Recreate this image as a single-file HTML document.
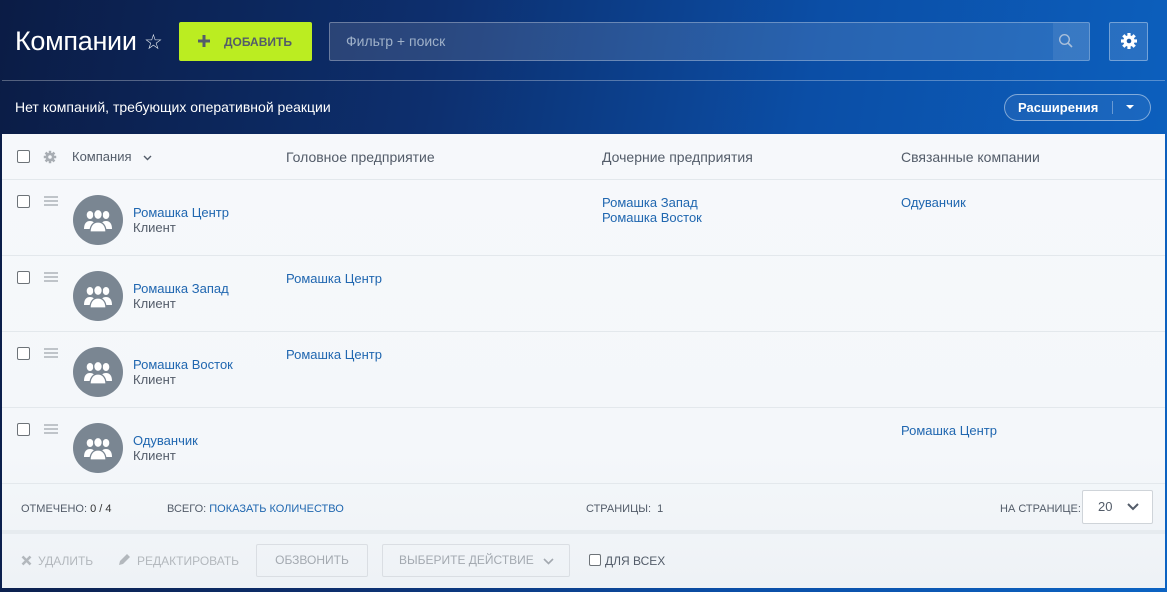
<!DOCTYPE html>
<html><head><meta charset="utf-8"><style>
*{margin:0;padding:0;box-sizing:border-box}
body{width:1167px;height:592px;overflow:hidden;font-family:"Liberation Sans",sans-serif;position:relative;
background:linear-gradient(100deg,#0b1c45 0%,#0d2f6e 35%,#0b4ea6 65%,#0c63c2 100%);}
.a{position:absolute;white-space:nowrap}
.panel{position:absolute;left:2px;top:134px;width:1163px;height:454px;background:linear-gradient(180deg,#f6f8fb 0%,#f4f7fa 70%,#eef2f6 100%)}
.cb{position:absolute;width:13px;height:13px;border:1px solid #6d7378;border-radius:2px;background:#fff}
.av{position:absolute;width:50px;height:50px;border-radius:50%;background:#7a8692}
.ln{color:#2067b0;font-size:13px}
.sub{color:#535c69;font-size:13px}
.row{position:absolute;left:0;width:1163px;border-top:1px solid #e3e8ec}
.hd{color:#535c69;font-size:14px}
.sm{font-size:11px;color:#535c69}
.btn{position:absolute;border:1px solid #dadee3;border-radius:2px;font-size:12px;color:#a3a9b0;text-align:center}
</style></head><body>
<div class="a" style="left:15px;top:26px;font-size:27px;color:#fff;letter-spacing:-0.3px">Компании</div>
<div class="a" style="left:144px;top:30px;font-size:21px;color:#e6ebf2">☆</div>
<div class="a" style="left:179px;top:22px;width:133px;height:39px;background:#bbed21;border-radius:2px"></div>
<svg class="a" style="left:198px;top:35px" width="12" height="12"><path d="M6 0v12M0 6h12" stroke="#535c69" stroke-width="3"/></svg>
<div class="a" style="left:224px;top:35px;font-size:12px;font-weight:bold;color:#535c69">ДОБАВИТЬ</div>
<div class="a" style="left:329px;top:22px;width:761px;height:39px;background:rgba(255,255,255,0.12);border:1px solid rgba(255,255,255,0.3);border-radius:2px"></div>
<div class="a" style="left:1053px;top:23px;width:36px;height:37px;background:rgba(255,255,255,0.08)"></div>
<svg class="a" style="left:1058px;top:33px" width="16" height="16"><circle cx="6.5" cy="6.5" r="4.8" fill="none" stroke="#a9bfda" stroke-width="1.4"/><line x1="10" y1="10" x2="14" y2="14" stroke="#a9bfda" stroke-width="1.6"/></svg>
<div class="a" style="left:346px;top:33px;font-size:14px;color:#9fb1c9">Фильтр + поиск</div>
<div class="a" style="left:1109px;top:22px;width:39px;height:39px;background:rgba(255,255,255,0.12);border:1px solid rgba(255,255,255,0.35);border-radius:2px"></div>
<svg class="a" style="left:1120px;top:32px" width="18" height="18" viewBox="0 0 18 18"><g fill="#fff"><circle cx="9" cy="9" r="5.6"/><g stroke="#fff" stroke-width="3.2"><line x1="9" y1="1" x2="9" y2="17"/><line x1="1" y1="9" x2="17" y2="9"/><line x1="3.3" y1="3.3" x2="14.7" y2="14.7"/><line x1="14.7" y1="3.3" x2="3.3" y2="14.7"/></g></g><circle cx="9" cy="9" r="2.3" fill="#1d5aa5"/></svg>
<div class="a" style="left:2px;top:80px;width:1163px;height:1px;background:rgba(255,255,255,0.3)"></div>
<div class="a" style="left:15px;top:99px;font-size:14px;color:#fff">Нет компаний, требующих оперативной реакции</div>
<div class="a" style="left:1004px;top:94px;width:147px;height:27px;border:1px solid rgba(255,255,255,0.45);border-radius:14px;background:rgba(255,255,255,0.06)"></div>
<div class="a" style="left:1018px;top:100px;font-size:13px;font-weight:bold;color:#fff">Расширения</div>
<div class="a" style="left:1112px;top:101px;width:1px;height:13px;background:rgba(255,255,255,0.35)"></div>
<div class="a" style="left:1126px;top:105px;width:0;height:0;border-left:4px solid transparent;border-right:4px solid transparent;border-top:4px solid #fff"></div>

<svg width="0" height="0" style="position:absolute"><defs>
<g id="ppl" fill="#fff"><ellipse cx="7" cy="7" rx="3.3" ry="4"/><path d="M1 21c0-5 2-8 6-8s6 3 6 8z"/><ellipse cx="23" cy="7" rx="3.3" ry="4"/><path d="M17 21c0-5 2-8 6-8s6 3 6 8z"/>
<ellipse cx="15" cy="6.5" rx="4.3" ry="5" stroke="#7a8692" stroke-width="1.3"/><path d="M7 24c0-6 3-10 8-10s8 4 8 10z" stroke="#7a8692" stroke-width="1.3"/></g>
<g id="ham" fill="#bfc4c9"><rect x="0" y="0" width="14" height="2"/><rect x="0" y="4" width="14" height="2"/><rect x="0" y="8" width="14" height="2"/></g>
</defs></svg>

<div class="panel">
<div class="cb" style="left:15px;top:16px"></div>
<svg class="a" style="left:41px;top:16px" width="14" height="14" viewBox="0 0 18 18"><g fill="#a8adb3"><circle cx="9" cy="9" r="5.6"/><g stroke="#a8adb3" stroke-width="3.2"><line x1="9" y1="1" x2="9" y2="17"/><line x1="1" y1="9" x2="17" y2="9"/><line x1="3.3" y1="3.3" x2="14.7" y2="14.7"/><line x1="14.7" y1="3.3" x2="3.3" y2="14.7"/></g></g><circle cx="9" cy="9" r="2.3" fill="#f6f8fb"/></svg>
<div class="a hd" style="left:70px;top:15px;font-size:13px">Компания</div>
<svg class="a" style="left:141px;top:21px" width="9" height="6"><path d="M1 1l3.5 3.5 3.5-3.5" fill="none" stroke="#535c69" stroke-width="1.4"/></svg>
<div class="a hd" style="left:284px;top:15px">Головное предприятие</div>
<div class="a hd" style="left:600px;top:15px">Дочерние предприятия</div>
<div class="a hd" style="left:899px;top:15px">Связанные компании</div>

<div class="row" style="top:45px;height:76px">
<div class="cb" style="left:15px;top:15px"></div><svg class="a" style="left:42px;top:16px" width="14" height="10"><use href="#ham"/></svg>
<div class="av" style="left:71px;top:15px"><svg style="position:absolute;left:10px;top:13px" width="30" height="24"><use href="#ppl"/></svg></div>
<div class="a ln" style="left:131px;top:25px">Ромашка Центр</div><div class="a sub" style="left:131px;top:40px">Клиент</div>
<div class="a ln" style="left:600px;top:15px">Ромашка Запад</div><div class="a ln" style="left:600px;top:30px">Ромашка Восток</div>
<div class="a ln" style="left:899px;top:15px">Одуванчик</div></div>
<div class="row" style="top:121px;height:76px">
<div class="cb" style="left:15px;top:15px"></div><svg class="a" style="left:42px;top:16px" width="14" height="10"><use href="#ham"/></svg>
<div class="av" style="left:71px;top:15px"><svg style="position:absolute;left:10px;top:13px" width="30" height="24"><use href="#ppl"/></svg></div>
<div class="a ln" style="left:131px;top:25px">Ромашка Запад</div><div class="a sub" style="left:131px;top:40px">Клиент</div>
<div class="a ln" style="left:284px;top:15px">Ромашка Центр</div></div>
<div class="row" style="top:197px;height:76px">
<div class="cb" style="left:15px;top:15px"></div><svg class="a" style="left:42px;top:16px" width="14" height="10"><use href="#ham"/></svg>
<div class="av" style="left:71px;top:15px"><svg style="position:absolute;left:10px;top:13px" width="30" height="24"><use href="#ppl"/></svg></div>
<div class="a ln" style="left:131px;top:25px">Ромашка Восток</div><div class="a sub" style="left:131px;top:40px">Клиент</div>
<div class="a ln" style="left:284px;top:15px">Ромашка Центр</div></div>
<div class="row" style="top:273px;height:76px">
<div class="cb" style="left:15px;top:15px"></div><svg class="a" style="left:42px;top:16px" width="14" height="10"><use href="#ham"/></svg>
<div class="av" style="left:71px;top:15px"><svg style="position:absolute;left:10px;top:13px" width="30" height="24"><use href="#ppl"/></svg></div>
<div class="a ln" style="left:131px;top:25px">Одуванчик</div><div class="a sub" style="left:131px;top:40px">Клиент</div>
<div class="a ln" style="left:899px;top:15px">Ромашка Центр</div></div>
<div class="row" style="top:349px;height:48px">
<div class="a sm" style="left:19px;top:19px">ОТМЕЧЕНО: <span style="color:#333">0 / 4</span></div>
<div class="a sm" style="left:165px;top:19px">ВСЕГО: <span style="color:#2067b0">ПОКАЗАТЬ КОЛИЧЕСТВО</span></div>
<div class="a sm" style="left:584px;top:19px">СТРАНИЦЫ:&nbsp; 1</div>
<div class="a sm" style="left:998px;top:19px">НА СТРАНИЦЕ:</div>
<div class="a" style="left:1080px;top:6px;width:71px;height:34px;border:1px solid #cfd4d9;border-radius:2px;background:#fff"></div>
<div class="a" style="left:1096px;top:15px;font-size:13px;color:#535c69">20</div>
<svg class="a" style="left:1125px;top:19px" width="12" height="8"><path d="M1 1l5 5 5-5" fill="none" stroke="#535c69" stroke-width="2"/></svg>
</div>
<div class="a" style="left:0;top:396px;width:1163px;height:4px;background:#e6ebef"></div>
<svg class="a" style="left:19px;top:421px" width="11" height="11"><path d="M1.5 1.5l8 8M9.5 1.5l-8 8" stroke="#b3b8bd" stroke-width="2.6"/></svg>
<div class="a" style="left:36px;top:420px;font-size:12px;color:#b3b8bd">УДАЛИТЬ</div>
<svg class="a" style="left:115px;top:419px" width="14" height="14"><path d="M2 12l1-4 7-7 3 3-7 7z" fill="#b3b8bd"/></svg>
<div class="a" style="left:135px;top:420px;font-size:12px;color:#b3b8bd">РЕДАКТИРОВАТЬ</div>
<div class="btn" style="left:254px;top:410px;width:112px;height:33px;line-height:31px">ОБЗВОНИТЬ</div>
<div class="btn" style="left:380px;top:410px;width:188px;height:33px;line-height:31px;text-align:left;padding-left:16px">ВЫБЕРИТЕ ДЕЙСТВИЕ</div>
<svg class="a" style="left:541px;top:424px" width="11" height="7"><path d="M1 1l4.5 4.5 4.5-4.5" fill="none" stroke="#a3a9b0" stroke-width="1.6"/></svg>
<div class="cb" style="left:587px;top:420px;width:12px;height:12px"></div>
<div class="a" style="left:603px;top:420px;font-size:12px;color:#535c69">ДЛЯ ВСЕХ</div>
</div>
</body></html>
